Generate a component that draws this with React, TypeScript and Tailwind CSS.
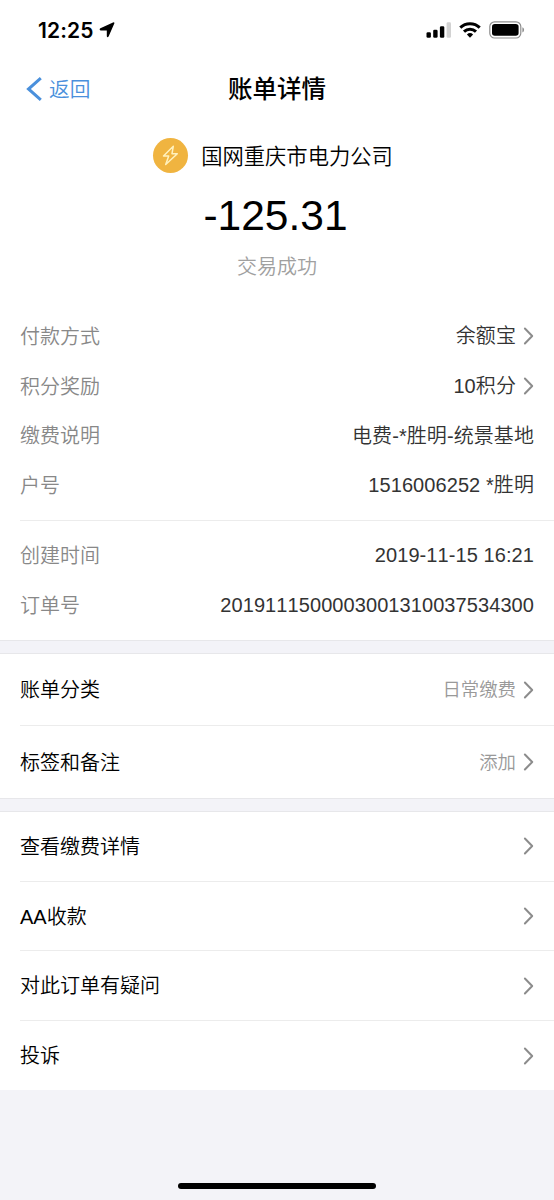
import { ReactNode } from "react";

interface Detail {
  label: string;
  value: string;
  link?: boolean;
}

const PAYMENT: Detail[] = [
  { label: "付款方式", value: "余额宝", link: true },
  { label: "积分奖励", value: "10积分", link: true },
  { label: "缴费说明", value: "电费-*胜明-统景基地" },
  { label: "户号", value: "1516006252 *胜明" },
];

const ORDER: Detail[] = [
  { label: "创建时间", value: "2019-11-15 16:21" },
  { label: "订单号", value: "2019111500003001310037534300" },
];

const ACTIONS = ["查看缴费详情", "AA收款", "对此订单有疑问", "投诉"];

function Chevron() {
  return (
    <svg width="11" height="18" viewBox="0 0 11 18" fill="none" className="ml-[7px] shrink-0 text-[#8c8c8c]">
      <path d="M1.9 1.5L9.2 9l-7.3 7.5" stroke="currentColor" strokeWidth="2" strokeLinecap="round" strokeLinejoin="round" />
    </svg>
  );
}

function StatusBar() {
  return (
    <div className="flex h-[60px] items-center justify-between pl-[38px] pr-[29px]">
      <div className="flex items-center gap-[6px]">
        <span className="font-['Inter'] text-[21px] font-semibold leading-none tracking-[0.1px]">12:25</span>
        <svg width="16" height="16" viewBox="0 0 16 16">
          <path d="M14 .4Q15.800 0 15.300 1.600L9.600 14.500Q8.300 16 7.800 14.200V8.600H1.600Q-.2 7.600 1.400 6.300Z" />
        </svg>
      </div>
      <div className="flex items-center">
        <svg width="26" height="16" viewBox="0 0 26 16">
          <rect x="0.500" y="10.300" width="4.400" height="5.400" rx="1.300" />
          <rect x="7.200" y="7.700" width="4.400" height="8" rx="1.300" />
          <rect x="13.900" y="4.200" width="4.400" height="11.500" rx="1.300" />
          <rect x="20.600" y="0.200" width="4.400" height="15.500" rx="1.300" fill="#d2d2d2" />
        </svg>
        <svg width="22" height="16" viewBox="0 0 22 16" fill="none" stroke="currentColor" strokeWidth="3" className="ml-[7px]">
          <path d="M1.300 5.600a14 14 0 0 1 19.400 0" />
          <path d="M5 9.600a8.700 8.700 0 0 1 12 0" />
          <path d="M11 15.700l-3.100-3.200a4.500 4.500 0 0 1 6.200 0Z" fill="currentColor" stroke="none" />
        </svg>
        <svg width="36" height="18" viewBox="0 0 36 18" className="ml-[8px]">
          <rect x="0.800" y="0.800" width="31" height="16.200" rx="4.800" fill="none" stroke="#8e8e8e" strokeWidth="1.200" />
          <rect x="3" y="3" width="26.600" height="11.800" rx="2.800" />
          <path d="M33.400 6.300c2.200.8 2.200 4.400 0 5.200Z" fill="#8e8e8e" />
        </svg>
      </div>
    </div>
  );
}

function NavBar() {
  return (
    <div className="relative flex h-[58px] items-center justify-center">
      <button className="absolute left-[26px] flex items-center text-[#4a90dc]">
        <svg width="17" height="24" viewBox="0 0 17 24" fill="none">
          <path d="M14.800 1.200 2.500 12l12.300 10.800" stroke="currentColor" strokeWidth="3" />
        </svg>
        <span className="ml-[6px] pt-[2px] text-[20.7px] leading-none">返回</span>
      </button>
      <h1 className="pt-[3px] text-[24.5px] font-medium leading-none">账单详情</h1>
    </div>
  );
}

function DetailRow({ label, value, link }: Detail) {
  return (
    <div className="flex h-[49.7px] items-center pr-5">
      <span className="pt-[2px] text-[#888]">{label}</span>
      <span className="ml-auto pt-px tracking-[0.08px] text-[#333]">{value}</span>
      {link && <Chevron />}
    </div>
  );
}

function Cell({ title, children }: { title: string; children?: ReactNode }) {
  return (
    <div className="flex h-full items-center pr-5">
      <span className="pt-px">{title}</span>
      <span className="ml-auto pt-[2px] text-[18.4px] text-[#999]">{children}</span>
      <Chevron />
    </div>
  );
}

export default function App() {
  return (
    <div className="flex h-[1200px] w-[554px] flex-col overflow-hidden bg-[#f3f3f8] font-['Liberation_Sans','Noto_Sans_CJK_SC',sans-serif] text-[20px] font-[350] leading-none text-black [font-kerning:none]">
      <div className="h-[641px] shrink-0 border-b border-[#e7e7ea] bg-white">
        <StatusBar />
        <NavBar />

        <div className="flex h-[193px] flex-col items-center pt-[20px]">
          <div className="flex h-[35px] items-center pr-[8px]">
            <div className="flex size-[35px] items-center justify-center rounded-full bg-[#f0b440]">
              <svg width="17" height="21" viewBox="0 0 17 21" fill="none" stroke="#fff1bd" strokeWidth="1.5" strokeLinejoin="round">
                <path d="M11.300 1.300 1.500 11h5.200l-3 8.500L15.300 8.700H10Z" />
              </svg>
            </div>
            <span className="ml-[13px] pt-[4px] text-[21.3px]">国网重庆市电力公司</span>
          </div>
          <div className="mr-[3px] mt-[22px] text-[42.5px]">-125.31</div>
          <div className="mt-[19px] text-[#a0a0a0]">交易成功</div>
        </div>

        <div className="pl-5">
          <div className="h-[210px] border-b border-[#ececec]">
            {PAYMENT.map((d) => (
              <DetailRow key={d.label} {...d} />
            ))}
          </div>
          <div className="pt-[9px]">
            {ORDER.map((d) => (
              <DetailRow key={d.label} {...d} />
            ))}
          </div>
        </div>
      </div>

      <div className="mt-[12px] h-[146px] shrink-0 border-y border-[#e7e7ea] bg-white pl-5">
        <div className="h-[72px] border-b border-[#ececec]">
          <Cell title="账单分类">日常缴费</Cell>
        </div>
        <div className="h-[72px]">
          <Cell title="标签和备注">添加</Cell>
        </div>
      </div>

      <div className="mt-[12px] shrink-0 border-t border-[#e7e7ea] bg-white pl-5">
        {ACTIONS.map((title) => (
          <div key={title} className="h-[69.7px] border-b border-[#ececec] last:h-[69px] last:border-0">
            <Cell title={title} />
          </div>
        ))}
      </div>

      <div className="mx-auto mb-[11px] mt-auto h-[6px] w-[198px] rounded-full bg-black" />
    </div>
  );
}
